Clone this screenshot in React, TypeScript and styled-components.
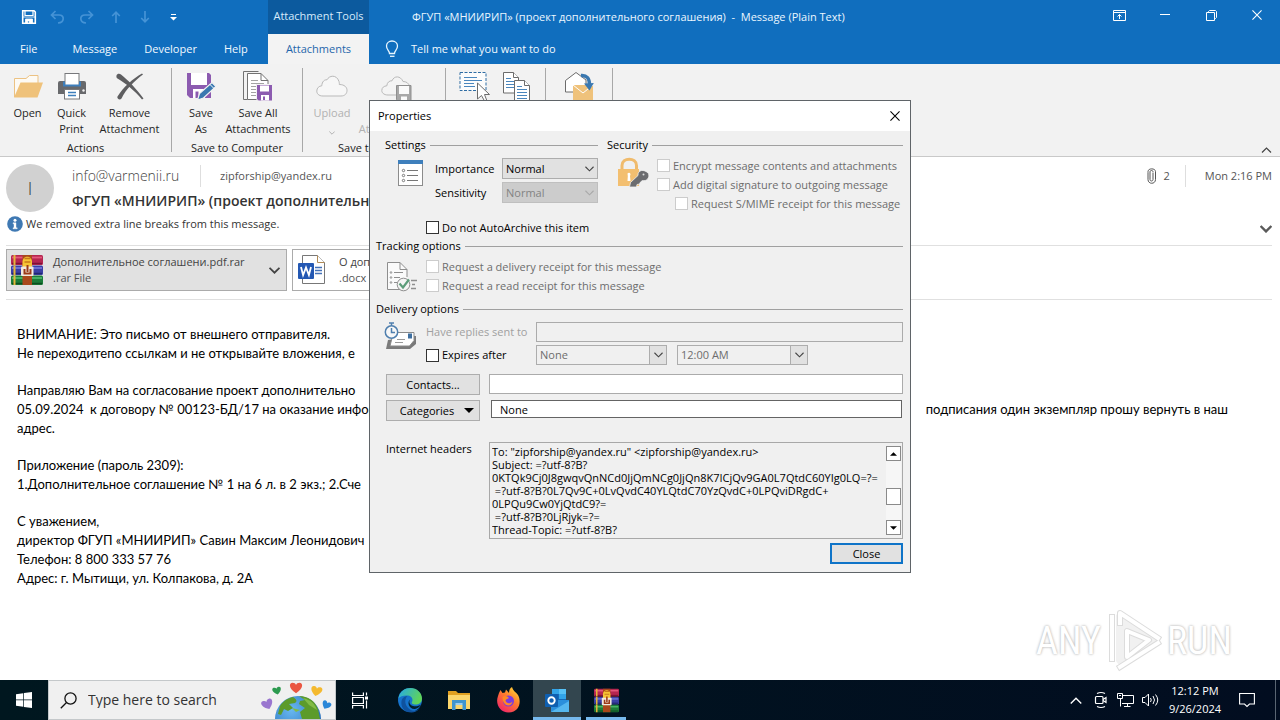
import React from "react";
import styled, { createGlobalStyle, css } from "styled-components";

const UI = '"Open Sans", "Noto Sans", sans-serif';

const Global = createGlobalStyle`
  * { box-sizing: border-box; }
  body { margin: 0; background: #fff; font-family: ${UI}; font-size: 11px; line-height: 16px; color: #222; }
  button, input, select, textarea { font: inherit; color: inherit; margin: 0; border-radius: 0; }
  button { padding: 0; border: 0; background: none; }
  svg { display: block; flex: none; }
  h1, h2, p { margin: 0; font: inherit; }
`;

const Page = styled.div`
  position: relative;
  display: flex;
  flex-direction: column;
  min-height: 100vh;
`;

/* ---------- title bar ---------- */

const TopBar = styled.header`
  display: grid;
  grid-template-columns: 268px 101px 1fr auto;
  grid-template-rows: 34px 30px;
  background: #106ebe;
  color: #fff;
`;

const QuickAccess = styled.div`
  display: flex;
  align-items: center;
  padding-left: 14px;
`;

const QuickButton = styled.button<{ $dim?: boolean }>`
  display: flex;
  width: 29px;
  height: 32px;
  align-items: center;
  justify-content: center;
  color: ${(p) => (p.$dim ? "#4593d6" : "#fff")};
`;

const ContextTitle = styled.div`
  display: flex;
  align-items: center;
  justify-content: center;
  padding-bottom: 2px;
  background: #0c5a9e;
  color: #d6ebfb;
  white-space: nowrap;
`;

const WindowTitle = styled.h1`
  align-self: center;
  padding-left: 43px;
  color: #eaf6ff;
  white-space: pre;
`;

const WindowButtons = styled.div`
  display: flex;
  padding-bottom: 4px;
`;

const WindowButton = styled.button`
  display: flex;
  width: 46px;
  align-items: center;
  justify-content: center;
`;

const Tabs = styled.nav`
  grid-row: 2;
  display: flex;
  align-items: center;
  gap: 27px;
  padding-left: 20px;
  & > :first-child { margin-right: 8px; }
`;

const Tab = styled.button`
  color: #f2f9ff;
`;

const ActiveTab = styled.button`
  grid-row: 2;
  background: #f3f3f3;
  color: #1f66ab;
`;

const TellMe = styled.button`
  grid-row: 2;
  display: flex;
  align-items: center;
  gap: 12px;
  padding-left: 16px;
  color: #f2f9ff;
`;

/* ---------- ribbon ---------- */

const Ribbon = styled.div`
  display: flex;
  height: 93px;
  background: #f2f2f2;
  border-bottom: 1px solid #c9c9c9;
`;

const RibbonGroup = styled.section<{ $width: number }>`
  display: flex;
  flex-direction: column;
  flex: none;
  align-items: center;
  width: ${(p) => p.$width}px;
  padding-top: 7px;
`;

const GroupRule = styled.div`
  flex: none;
  width: 1px;
  margin: 4px 0;
  background: #a8a8a8;
`;

const GroupButtons = styled.div`
  display: flex;
  height: 69px;
`;

const GroupLabel = styled.div`
  min-width: 72px;
`;

const RibbonButton = styled.button<{ $width: number }>`
  display: flex;
  flex-direction: column;
  align-items: center;
  flex: none;
  width: ${(p) => p.$width}px;
  gap: 4px;
  color: #262626;
  white-space: pre-line;
  &:disabled { color: #b1b1b1; }
  & > svg { margin-top: 6px; }
`;

const RibbonIcon = styled.span`
  display: flex;
  height: 30px;
  align-items: center;
  justify-content: center;
`;

const Collapse = styled.button`
  margin: auto 8px 3px auto;
  color: #444;
`;

/* ---------- message header ---------- */

const MessageHead = styled.div`
  display: flex;
  gap: 18px;
  height: 58px;
  padding: 7px 8px 0 6px;
`;

const Avatar = styled.div`
  display: flex;
  flex: none;
  width: 48px;
  height: 48px;
  align-items: center;
  justify-content: center;
  border-radius: 50%;
  background: #d1d1d1;
  color: #333;
  font-size: 18px;
  font-weight: 300;
`;

const Who = styled.div`
  flex: 1;
  min-width: 0;
`;

const Addresses = styled.div`
  display: flex;
  align-items: center;
  height: 24px;
  color: #555;
`;

const Sender = styled.span`
  width: 128px;
  font-size: 14px;
  font-weight: 300;
  color: #444;
`;

const ThinRule = styled.span`
  width: 1px;
  height: 22px;
  margin-right: 19px;
  background: #dedede;
`;

const Subject = styled.h2`
  font-size: 14px;
  font-weight: 600;
  line-height: 26px;
  color: #333;
  white-space: nowrap;
`;

const Meta = styled.div`
  display: flex;
  align-items: center;
  height: 24px;
  color: #555;
  white-space: nowrap;
  & > svg { margin-right: 7px; }
  & > ${ThinRule} { margin-left: 15px; }
`;

const InfoBar = styled.div`
  display: flex;
  align-items: center;
  gap: 3px;
  height: 18px;
  padding: 0 8px 0 7px;
  color: #333;
  & > button { margin-left: auto; padding-top: 10px; color: #5a5a5a; }
`;

const Attachments = styled.div`
  display: flex;
  gap: 5px;
  margin: 12px 8px 0 6px;
  padding: 3px 0 8px;
  border: solid #e0e0e0;
  border-width: 1px 0;
`;

const Attachment = styled.button<{ $selected?: boolean }>`
  display: flex;
  flex: none;
  align-items: center;
  width: 281px;
  height: 42px;
  padding: 0 6px 0 4px;
  text-align: left;
  border: 1px solid #ababab;
  background: ${(p) => (p.$selected ? "#e1e1e1" : "#fff")};
  color: #444;
  & > svg:last-child { margin-left: auto; }
`;

const FileName = styled.span`
  display: block;
  padding-left: 10px;
  white-space: nowrap;
  & small { display: block; font-size: 11px; color: #555; }
`;

const MessageBody = styled.main`
  position: relative;
  flex: 1;
  padding: 25px 52px 40px 17px;
  font-family: Lato, Carlito, "Open Sans", sans-serif;
  font-size: 13px;
  line-height: 19px;
  color: #000;
  & p { margin-bottom: 18px; white-space: nowrap; }
`;

const SplitLine = styled.span`
  display: flex;
  justify-content: space-between;
`;

const Watermark = styled.div`
  position: absolute;
  right: 48px;
  bottom: 7px;
  display: flex;
  align-items: center;
  gap: 5px;
  font-family: "Liberation Sans Narrow", "Roboto Condensed", "DejaVu Sans Condensed", sans-serif;
  font-size: 38px;
  line-height: 64px;
  color: #fff;
  text-shadow: 0 0 3px #bbb, 0 0 2px #ccc;
`;

/* ---------- dialog ---------- */

const DialogLayer = styled.div`
  position: absolute;
  inset: 100px 0 auto 0;
  display: flex;
  justify-content: center;
`;

const Dialog = styled.section`
  width: 542px;
  border: 1px solid #5f6468;
  background: #f0f0f0;
  color: #000;
`;

const DialogTitle = styled.div`
  display: flex;
  align-items: center;
  justify-content: space-between;
  height: 30px;
  padding: 0 10px 0 8px;
  background: #fff;
`;

const DialogBody = styled.form`
  padding: 7px 7px 8px 6px;
`;

const Heading = styled.h2`
  display: flex;
  align-items: center;
  gap: 4px;
  height: 14px;
  &::after { content: ""; flex: 1; height: 1px; background: #a0a0a0; }
`;

const TopColumns = styled.div`
  display: grid;
  grid-template-columns: 213px 1fr;
  gap: 9px;
  padding-left: 9px;
`;

const SettingsArea = styled.div`
  display: flex;
  gap: 11px;
  padding: 6px 0 0 12px;
`;

const SettingsGrid = styled.div`
  display: grid;
  grid-template-columns: 67px 96px;
  grid-auto-rows: 21px;
  row-gap: 3px;
  align-items: center;
`;

const SecurityArea = styled.div`
  display: flex;
  gap: 8px;
  padding: 4px 0 0 10px;
`;

const Section = styled.div`
  display: grid;
  grid-template-columns: 50px 1fr;
`;

const TrackingSection = styled(Section)`
  padding: 4px 0 7px;
`;

const DeliverySection = styled(Section)`
  padding-top: 6px;
`;

const ArchiveRow = styled.div`
  padding: 5px 0 2px 50px;
`;

const SectionIcon = styled.div<{ $left: number; $top: number }>`
  padding: ${(p) => p.$top}px 0 0 ${(p) => p.$left}px;
`;

const CheckLabel = styled.label<{ $off?: boolean; $indent?: boolean }>`
  display: flex;
  align-items: center;
  gap: 3px;
  height: 19px;
  margin-left: ${(p) => (p.$indent ? 18 : 0)}px;
  white-space: nowrap;
  color: ${(p) => (p.$off ? "#6d6d6d" : "#000")};
`;

const Box = styled.input`
  appearance: none;
  flex: none;
  width: 13px;
  height: 13px;
  border: 1px solid #333;
  background: #fff;
  &:disabled { border-color: #ccc; }
`;

const SelectWrap = styled.span<{ $width: number }>`
  position: relative;
  display: block;
  width: ${(p) => p.$width}px;
`;

const Select = styled.select<{ $flat?: boolean }>`
  appearance: none;
  display: block;
  width: 100%;
  height: ${(p) => (p.$flat ? 20 : 21)}px;
  padding: 0 0 0 3px;
  line-height: 16px;
  border: 1px solid #adadad;
  background: ${(p) => (p.$flat ? "#f0f0f0" : "#e1e1e1")};
  color: ${(p) => (p.$flat ? "#6d6d6d" : "#000")};
  opacity: 1;
  ${(p) => !p.$flat && css`&:disabled { background: #ccc; border-color: #bfbfbf; color: #838383; }`}
`;

const Arrow = styled.span<{ $boxed?: boolean; $dim?: boolean }>`
  position: absolute;
  right: 0;
  top: 0;
  bottom: 0;
  display: flex;
  width: 18px;
  align-items: center;
  justify-content: center;
  pointer-events: none;
  color: ${(p) => (p.$dim ? "#a9a9a9" : "#444")};
  ${(p) => p.$boxed && css`border: 1px solid #adadad; background: #e1e1e1;`}
`;

const FieldRow = styled.div`
  display: grid;
  grid-template-columns: 110px 1fr;
  align-items: center;
  height: 20px;
  margin-bottom: 3px;
`;

const DimLabel = styled.label`
  color: #a0a0a0;
`;

const Combos = styled.div`
  display: flex;
  gap: 10px;
`;

const TextField = styled.input<{ $dark?: boolean }>`
  display: block;
  width: 100%;
  height: ${(p) => (p.$dark ? 18 : 20)}px;
  padding: 0 8px;
  border: 1px solid ${(p) => (p.$dark ? "#646464" : "#ababab")};
  background: #fff;
  &:disabled { background: #f0f0f0; }
`;

const BottomGrid = styled.div`
  display: grid;
  grid-template-columns: 94px 1fr;
  column-gap: 9px;
  row-gap: 5px;
  align-items: start;
  padding: 6px 0 0 10px;
  & > label { padding-top: 15px; }
`;

const Inset = styled.div`
  padding: 0 1px 0 2px;
`;

const PushButton = styled.button`
  display: flex;
  align-items: center;
  justify-content: center;
  gap: 10px;
  height: 21px;
  border: 1px solid #adadad;
  background: #e1e1e1;
  & > svg { margin-right: -8px; }
`;

const HeadersBox = styled.div`
  display: flex;
  height: 97px;
  margin-top: 16px;
  padding: 2px 1px 2px 2px;
  border: 1px solid #a8a8a8;
`;

const HeadersText = styled.textarea`
  flex: 1;
  min-width: 0;
  padding: 0;
  border: 0;
  resize: none;
  overflow: hidden;
  white-space: pre;
  background: transparent;
  line-height: 13px;
`;

const Scroll = styled.div`
  display: flex;
  flex-direction: column;
  justify-content: space-between;
  width: 15px;
  margin: 1px 0;
  background: #f6f6f6;
  & > button {
    display: flex;
    align-items: center;
    justify-content: center;
    height: 15px;
    border: 1px solid #8a8a8a;
    background: #fff;
  }
`;

const Thumb = styled.span`
  height: 17px;
  margin-top: 12px;
  border: 1px solid #8a8a8a;
  background: #fff;
`;

const DialogFoot = styled.div`
  display: flex;
  justify-content: flex-end;
  padding-top: 4px;
`;

const CloseButton = styled.button`
  width: 73px;
  height: 21px;
  border: 2px solid #0f74c8;
  background: #e1e1e1;
`;

/* ---------- task bar ---------- */

const TaskBar = styled.footer`
  display: flex;
  height: 40px;
  background: linear-gradient(90deg, #00171f, #020d20);
  color: #fff;
`;

const StartButton = styled.button`
  display: flex;
  width: 48px;
  align-items: center;
  justify-content: center;
`;

const Search = styled.label`
  display: flex;
  align-items: center;
  width: 288px;
  padding-left: 11px;
  border: 1px solid #c4c8ca;
  background: #f0f0f0;
  color: #111;
`;

const SearchInput = styled.input`
  flex: 1;
  min-width: 0;
  padding: 0 0 0 11px;
  border: 0;
  background: none;
  font-size: 14px;
  &::placeholder { color: #333; opacity: 1; }
`;

const Apps = styled.div`
  display: flex;
  gap: 1px;
  & > :first-child { width: 49px; }
`;

const AppButton = styled.button<{ $active?: boolean; $running?: boolean }>`
  display: flex;
  width: 48px;
  align-items: center;
  justify-content: center;
  background: ${(p) => (p.$active ? "#33464f" : "none")};
  ${(p) => p.$active && css`box-shadow: inset 0 -3px #76b9ed;`}
  ${(p) => p.$running && css`background: linear-gradient(#76b9ed, #76b9ed) center bottom / 40px 3px no-repeat;`}
`;

const Tray = styled.div`
  display: flex;
  align-items: center;
  margin-left: auto;
  gap: 8px;
  & > :first-child { margin-right: 3px; }
`;

const TrayButton = styled.button`
  display: flex;
`;

const Clock = styled.time`
  width: 56px;
  margin-right: 8px;
  text-align: center;
  line-height: 18px;
`;

const Desktop = styled.button`
  align-self: stretch;
  width: 5px;
  margin-left: 12px;
  border-left: 1px solid #5a6572;
`;

/* ---------- icons ---------- */

const Chevron = ({ w = 10, h = 6, sw = 1.2, up = false }: { w?: number; h?: number; sw?: number; up?: boolean }) => (
  <svg width={w} height={h} viewBox="0 0 10 6" fill="none" stroke="currentColor" strokeWidth={sw}>
    <path d={up ? "M.5 5.500 5 1l4.500 4.500" : "M.5.5 5 5 9.500.5"} />
  </svg>
);

const WinRar = ({ size }: { size: number }) => (
  <svg width={size} height={size} viewBox="0 0 32 32">
    <rect x="0" y="1" width="32" height="10" rx="1.500" fill="#b52650" />
    <path d="M1 3.500h30" stroke="#e5577c" strokeWidth="1.800" />
    <path d="M1 9.500h30" stroke="#7d1235" strokeWidth="1.500" />
    <rect x="0" y="11.500" width="32" height="9.500" rx="1.500" fill="#3a3fa5" />
    <path d="M1 14h30" stroke="#7377d8" strokeWidth="1.800" />
    <path d="M1 19.500h30" stroke="#22266f" strokeWidth="1.500" />
    <rect x="0" y="21.500" width="32" height="9.500" rx="1.500" fill="#1c7c39" />
    <path d="M1 24h30" stroke="#4cb669" strokeWidth="1.800" />
    <path d="M1 29.500h30" stroke="#0d4e20" strokeWidth="1.500" />
    <path d="M3.500 1v10M3.500 11.500V21M3.500 21.500V31" stroke="#e4b53b" strokeWidth="2" />
    <rect x="11.500" y="1" width="9.500" height="30" fill="#a9481c" />
    <path d="M11.500 8c0-7 9.500-7 9.500 0v5h-9.500z" fill="#f6c435" />
    <path d="M13.500 4.500h6M13.500 8h6" stroke="#c8791a" strokeWidth="1.500" />
    <rect x="10" y="12.500" width="12.500" height="9.500" rx="1" fill="#f1e9df" />
    <path d="M13.500 15v4.500h6V15M16.500 11v7" stroke="#9b3a18" strokeWidth="2" fill="none" />
  </svg>
);

const SaveIcon = () => (
  <svg width="16" height="16" viewBox="0 0 16 16">
    <path d="M1.700 1.700h11.300l1.300 1.300v11.300H1.700z" fill="none" stroke="#fff" strokeWidth="1.600" />
    <path d="M4 2v4.500h8V2" fill="none" stroke="#fff" strokeWidth="1.200" />
    <path d="M2 8h12M4.500 14.500V10h7v4.500h-3V12h-2v2.500z" fill="#fff" stroke="#fff" strokeWidth=".8" />
  </svg>
);

const UndoIcon = ({ flip }: { flip?: boolean }) => (
  <svg width="15" height="14" viewBox="0 0 15 14" fill="none" stroke="currentColor" strokeWidth="1.700">
    <g transform={flip ? "translate(15 0) scale(-1 1)" : undefined}>
      <path d="M5.500 1 1.500 5l4 4M1.500 5h7.500c6 0 5.500 7.500-1 8" />
    </g>
  </svg>
);

const ArrowIcon = ({ down }: { down?: boolean }) => (
  <svg width="10" height="12" viewBox="0 0 10 12" fill="none" stroke="currentColor" strokeWidth="1.700">
    <path d={down ? "M5 0v11M1.200 7 5 10.800 8.800 7" : "M5 12V1M1.200 5 5 1.200 8.800 5"} />
  </svg>
);

const OpenIcon = () => (
  <svg width="30" height="26" viewBox="0 0 30 26">
    <path d="M1.500 24V5.500H13l3.500-3h8.500V10" fill="#fdfaf4" stroke="#ecc283" />
    <path d="M7.500 9.500H30L24.500 24.500H1z" fill="#efc27b" />
  </svg>
);

const PrinterIcon = () => (
  <svg width="30" height="28" viewBox="0 0 30 28">
    <path d="M1 11q0-2 2-2h24q2 0 2 2v11H1z" fill="#68696c" />
    <rect x="8" y="1.500" width="14" height="12" fill="#fff" stroke="#77787b" />
    <path d="M6 9.500v5h18v-5h-2v3H8v-3z" fill="#3e7fbc" />
    <rect x="7.500" y="17.500" width="15" height="9.500" fill="#fff" stroke="#77787b" />
    <path d="M11 20.500h8M11 23.500h8" stroke="#3e7fbc" strokeWidth="1.300" />
    <circle cx="26.500" cy="18.500" r="1.200" fill="#f2f2f2" />
  </svg>
);

const RemoveIcon = () => (
  <svg width="30" height="28" viewBox="0 0 30 28" fill="#5e5e60">
    <path d="M1.500 3.500C2 1.500 4.500 1 6 2.500 13 8 21 16.500 28.500 26.500L27 27.500C20 19 11 11.500 2.500 6.500 1.500 6 1.200 4.500 1.500 3.500z" />
    <path d="M28 2.500C20 8.500 11 17 6.500 26.500 5 28.500 1.500 27 2.500 24.500 8 15.500 18 6.500 27 1.500z" />
  </svg>
);

const SaveAsIcon = () => (
  <svg width="30" height="30" viewBox="0 0 30 30">
    <path d="M1 2h22l2 2v23H4l-3-3z" fill="#8c5bb0" />
    <rect x="5" y="2" width="16" height="12" fill="#fff" />
    <path d="M7 18h12v9H7z" fill="#fff" />
    <path d="M9.500 20.500h3V27h-3z" fill="#8c5bb0" />
    <path d="m11.500 29 2-6.500L26 11.500l4 4L17.500 27z" fill="#3a78b0" stroke="#f2f2f2" strokeWidth="1.200" />
    <path d="m24 13.500 4 4" stroke="#fff" />
  </svg>
);

const SaveAllIcon = () => (
  <svg width="30" height="32" viewBox="0 0 30 32">
    <path d="M4.500 29.500h-4v-28h15" fill="none" stroke="#727272" />
    <path d="M4.500 3.500h13.500l7 7V29.500H4.500z" fill="#fff" stroke="#727272" />
    <path d="M18 3.500v7h7" fill="none" stroke="#727272" />
    <path d="M8 10.500h7M8 13.500h13M8 16.500h6M8 19.500h5M8 22.500h5M8 25.500h5" stroke="#a3a3a3" />
    <path d="M13.500 14.500h16V31h-14l-2-2z" fill="#8c5bb0" stroke="#f2f2f2" />
    <path d="M17 15.500h9v6h-9zM18 25h8v5.500h-8z" fill="#fff" />
    <path d="M20 26.500h2V30h-2z" fill="#8c5bb0" />
  </svg>
);

const CloudIcon = () => (
  <svg width="32" height="26" viewBox="0 0 32 26" fill="#f7f7f7" stroke="#b9b9b9">
    <path d="M7 23C2.500 23 .8 20.500.8 18c0-3 2.200-5 5-5.200C6 8.500 8.500 6.500 11 6.800 13 2.500 20.500 1 23 8.500c0 0 .5 1.500.3 3 5.500 0 7.700 3 7.700 5.800 0 3.200-2 5.700-6 5.700z" />
  </svg>
);

const CloudSaveIcon = () => (
  <svg width="32" height="30" viewBox="0 0 32 30" fill="#f4f4f4" stroke="#b9b9b9">
    <path transform="translate(0 4)" d="M7 20C2.500 20 .8 17.500.8 15.500c0-3 2.200-4.500 5-4.700C6 7.500 8.500 5.500 11 5.800 13 .5 19.500.5 22 6.500c3 0 6 1.500 6.500 5V20z" />
    <path d="M15.500 14.500h14.500v16H17.500l-2-2z" fill="#a8a8a8" stroke="#8f8f8f" />
    <path d="M18 15h10v8H18z" fill="#fafafa" stroke="none" />
    <path d="M20 25.500h6v5h-6z" fill="#fafafa" stroke="none" />
  </svg>
);

const SelectAllIcon = () => (
  <svg width="32" height="30" viewBox="0 0 32 30">
    <rect x="2" y="1.500" width="26" height="18" fill="#fcfcfc" stroke="#2f6ca3" strokeDasharray="3 1.500" />
    <path d="M6 6.500h13M6 9.500h18M6 12.500h10M6 15.500h11" stroke="#4a86bd" strokeWidth="1.200" />
    <path d="M19.500 12v16l4-3.500 3 5.500h2.500l-2.500-6.500h5z" fill="#fff" stroke="#6c6c6c" />
  </svg>
);

const CopyIcon = () => (
  <svg width="28" height="30" viewBox="0 0 28 30" fill="#fff" stroke="#6c6c6c">
    <path d="M.5 1.500h10l5 5V22H.5z" />
    <path d="M10.500 1.500v5h5" />
    <path d="M3 7.500h5M3 10.500h8M3 13.500h8M3 16.500h8" stroke="#4a86bd" />
    <path d="M11.500 9.500h10l5 5V32h-15z" />
    <path d="M21.500 9.500v5h5" />
    <path d="M14 15.500h5M14 18.500h10M14 21.500h10M14 24.500h10M14 27.500h10" stroke="#4a86bd" />
  </svg>
);

const ShowMessageIcon = () => (
  <svg width="30" height="30" viewBox="0 0 30 30">
    <path d="M1.500 21V9.500L12 1.500 22 9v12z" fill="#fff" stroke="#6c6c6c" />
    <path d="M9 14h20v16H9z" fill="#efc27b" />
    <path d="m9 14 10 8 10-8" fill="none" stroke="#fff" />
    <path d="M17 4.500c6-.5 8.500 3 8.500 9" fill="none" stroke="#3a78b0" strokeWidth="3.400" />
    <path d="m20 12.500 5.500 7 4.300-7.500z" fill="#3a78b0" />
  </svg>
);

const BulbIcon = () => (
  <svg width="14" height="18" viewBox="0 0 14 18" fill="none" stroke="#e8f6ff" strokeWidth="1.300">
    <path d="M4.500 13.500c0-3-3-3.500-3-7.500C1.500 3 4 1 7 1s5.500 2 5.500 5c0 4-3 4.500-3 7.500z" />
    <path d="M5 16.300h4.500" />
  </svg>
);

const ClipIcon = () => (
  <svg width="9" height="16" viewBox="0 0 9 16" fill="none" stroke="#555">
    <path d="M6 4.500v7c0 2-3 2-3 0V4c0-1 .5-1.500 1.500-1.500S6 3 6 4M1 4.500V3.500C1 0 8.500 0 8.500 3.500v8c0 5-7.500 5-7.500 0z" />
  </svg>
);

const InfoIcon = () => (
  <svg width="16" height="16" viewBox="0 0 16 16">
    <circle cx="8" cy="8" r="7.800" fill="#3f79b3" />
    <circle cx="8" cy="4.200" r="1.500" fill="#fff" />
    <path d="M6 6.800h3v5h1.200v1H6v-1h1V7.800H6z" fill="#fff" stroke="#fff" strokeWidth=".4" />
  </svg>
);

const WordIcon = () => (
  <svg width="32" height="32" viewBox="-1 0 32 32">
    <path d="M4.500 1.500h15l7 7v21h-22z" fill="#fff" stroke="#777" />
    <path d="M19.500 1.500v7h7" fill="#fff" stroke="#b08a55" />
    <path d="M17 13.500h7M17 16.500h7M17 19.500h7" stroke="#4472b8" strokeWidth="1.300" />
    <rect x="0" y="9" width="16" height="16" rx="1" fill="#2458b3" />
    <path d="m3 13 2.100 8L8 13.500l2.900 7.500L13 13" fill="none" stroke="#fff" strokeWidth="1.800" />
  </svg>
);

const CloseIcon = ({ size = 11 }: { size?: number }) => (
  <svg width={size} height={size} viewBox="0 0 11 11" stroke="currentColor" strokeWidth="1.200">
    <path d="m.5.5 10 10M10.500.5l-10 10" />
  </svg>
);

const SettingsIcon = () => (
  <svg width="27" height="29" viewBox="0 0 27 29">
    <rect x="1.500" y="2.500" width="24" height="25" fill="#fff" stroke="#8c8c8c" />
    <path d="M1 2h25v4H1z" fill="#3e7fbc" />
    <path d="M10 12.500h11M10 17.500h11M10 22.500h11" stroke="#777" />
    <g fill="none" stroke="#777">
      <circle cx="6.500" cy="12.500" r="1.200" />
      <circle cx="6.500" cy="17.500" r="1.200" />
      <circle cx="6.500" cy="22.500" r="1.200" />
    </g>
  </svg>
);

const LockIcon = () => (
  <svg width="32" height="33" viewBox="0 0 32 33">
    <path d="M5 14V9.500C5 1 19.500 1 19.500 9.500V14" fill="none" stroke="#f0bb6c" strokeWidth="3" />
    <rect x="1" y="13" width="21" height="17" fill="#f3bf70" />
    <path d="M10.500 17.500c2-2 4 .5 2.500 2.500l.5 5h-3l.3-5z" fill="#fff" />
    <path d="m12.500 31 1-4.500 7.500-7c-.5-5.500 6-7 10.500-2 1.500 4.500-2 8-6 7l-2 1.500-1 2-2.500.5-.5 2.500z" fill="#6b6c6f" stroke="#f0f0f0" strokeWidth=".8" />
    <circle cx="26.500" cy="18.500" r="1" fill="#ddd" />
  </svg>
);

const TrackingIcon = () => (
  <svg width="32" height="31" viewBox="0 0 32 31" fill="none" stroke="#8e8e8e">
    <path d="M14 28.500H1.500v-27H14l7 7V16" fill="#fafafa" />
    <path d="M14 1.500v7h7M8 11.500h9M8 16.500h6M8 21.500h3" />
    <circle cx="5" cy="11.500" r=".8" /><circle cx="5" cy="16.500" r=".8" /><circle cx="5" cy="21.500" r=".8" />
    <circle cx="17.500" cy="23.500" r="6.300" fill="#f4f4f4" />
    <path d="m13.500 22.500 3.500 4 6-8" stroke="#5c9c7a" strokeWidth="2.200" />
    <path d="M25 19.500h6M26 23.500h3M25 27.500h5" strokeWidth="1.300" />
  </svg>
);

const DeliveryIcon = () => (
  <svg width="33" height="29" viewBox="0 0 33 29">
    <path d="m4 18-2 9h24l6-5v-8h-3z" fill="#7a7a7a" />
    <path d="M12 10.500h18v8l-4.500 5.500H6l2-8z" fill="#fff" stroke="#8a8a8a" />
    <path d="M13 17.500h8M11 20.500h8" stroke="#999" />
    <path d="M24 11.500h4v5h-4z" fill="#3e6fa0" />
    <circle cx="7.500" cy="10" r="6.200" fill="#f7f7f7" stroke="#4f7fae" strokeWidth="1.500" />
    <path d="M7.500 6v4.500h3.500M7.500 3.500V1M5 1h5" fill="none" stroke="#4f7fae" strokeWidth="1.500" />
  </svg>
);

const Triangle = ({ up, w = 7 }: { up?: boolean; w?: number }) => (
  <svg width={w} height={up ? 4 : Math.ceil(w / 2)} viewBox="0 0 8 4" fill="#000">
    <path d={up ? "M0 4h8L4 0z" : "M0 0h8L4 4z"} />
  </svg>
);

const heart = "M8 14C-1 8 0 2 4 2c2 0 3.500 1 4 2.500C8.500 3 10 2 12 2c4 0 5 6-4 12z";

const GlobeArt = () => (
  <svg width="74" height="38" viewBox="0 0 74 38">
    <defs>
      <radialGradient id="sea" cx=".35" cy=".3" r=".8">
        <stop offset="0" stopColor="#69b8f0" />
        <stop offset="1" stopColor="#1b63b4" />
      </radialGradient>
    </defs>
    <circle cx="37" cy="38" r="23" fill="url(#sea)" />
    <path d="M19 25c3-5 8-8 13-9 3 2 5 4 2 6l-6 1 4 4-5 3-4-2-3 6-3-1zM38 15c9 0 16 5 19 13l2 10H41l-2-7 5-4-6-4 1-3 5-1z" fill="#5c9b2b" />
    <path d="M42 17c8 2 12 6 14 12l-8-5zM31 27l8 2-4 2z" fill="#82bb45" />
    <path transform="translate(28 0) scale(.88)" d={heart} fill="#ea5642" />
    <path transform="translate(11 5) scale(.62) rotate(-12 8 8)" d={heart} fill="#2c9a4f" />
    <path transform="translate(49 4) scale(.8) rotate(12 8 8)" d={heart} fill="#f4b92e" />
    <path transform="translate(0 17) scale(.82) rotate(-22 8 8)" d={heart} fill="#9a76cf" />
    <path transform="translate(60 19) scale(.65) rotate(28 8 8)" d={heart} fill="#2b87d8" />
  </svg>
);

const TaskViewIcon = () => (
  <svg width="17" height="17" viewBox="0 0 17 17" fill="none" stroke="#fff" strokeWidth="1.200">
    <path d="M.6.5v3h10.800v-3M.6 16.500v-3h10.800v3M.6 5.500h10.800v6H.6zM14.500.5v3M14.500 8.500v8" />
    <path d="M13 4.500h3v3h-3z" fill="#fff" stroke="none" />
  </svg>
);

const EdgeIcon = () => (
  <svg width="26" height="26" viewBox="0 0 26 26">
    <defs>
      <linearGradient id="edgeTop" x1="0" y1="0" x2="1" y2=".4">
        <stop offset="0" stopColor="#25a9e8" />
        <stop offset="1" stopColor="#5fd45a" />
      </linearGradient>
    </defs>
    <circle cx="13" cy="13" r="12" fill="#1673cc" />
    <path d="M1.500 11C3 4 8 1 13.500 1 20 1 25 6 25 11.500c0 4-3 6-6.500 6-3 0-4.500-1.200-3.500-2.500 1.500-3-.5-6-4-6.500-4-.5-8 1-9.500 2.500z" fill="url(#edgeTop)" />
    <path d="M10.500 9C7 12 7.500 19 13 22.500c3 2 7 1.500 9.500-1-3 4.500-9 4.500-13 3C4 22 3 14 6 11c1-1.200 3-2 4.500-2z" fill="#0f529e" />
    <path d="M13.500 12c-2 2-1.500 6 2.500 7 3 .8 6 0 8-1.500-1 2-3 4-6 4.500-6 .5-8.500-7-4.500-10z" fill="#02202b" />
  </svg>
);

const ExplorerIcon = () => (
  <svg width="24" height="22" viewBox="0 0 24 22">
    <path d="M1 2h8l2 2h12v5H1z" fill="#e0a021" />
    <path d="M1 6h22v14H1z" fill="#fbd66c" />
    <path d="M5 11h14v10h-3.500v-5h-7v5H5z" fill="#3f95cf" />
    <path d="M8.500 14h7v2h-7z" fill="#9ccdec" />
  </svg>
);

const FirefoxIcon = () => (
  <svg width="25" height="26" viewBox="0 0 25 26">
    <defs>
      <linearGradient id="fox" x1=".9" y1="0" x2=".2" y2="1">
        <stop offset="0" stopColor="#ffe238" />
        <stop offset=".45" stopColor="#ff7b2d" />
        <stop offset="1" stopColor="#f0206c" />
      </linearGradient>
    </defs>
    <path d="M3 6 4.500 3l2 3 2.500-.5 1-3 3 3.500c0-3 1-5 3-6 1 4 4 5 6 8 3.500 6 2 17-9.500 17.500C4 25.500-1 17 2 9z" fill="url(#fox)" />
    <circle cx="12.500" cy="14" r="5.500" fill="#7a3be0" />
    <path d="M6.500 10c3-2 5-.5 6.500 1-1 1-3 1-3.500 2.500 1 3.500 5 3.500 7 1-1 6-10 5.500-10-4.500z" fill="#ff8a22" />
  </svg>
);

const OutlookIcon = () => (
  <svg width="26" height="25" viewBox="0 0 26 25">
    <path d="M8 1h14v15H8z" fill="#1469b8" />
    <path d="M8 1h7v5H8zM15 6h7v5h-7z" fill="#32a4e8" />
    <path d="M15 1h7v5h-7z" fill="#57c1f5" />
    <path d="M7 12h18v12H7z" fill="#2b8fdb" />
    <path d="m7 24 18-11v11z" fill="#55b7ef" />
    <rect x="1" y="6" width="13" height="13" rx="1" fill="#0f5fb0" />
    <circle cx="7.500" cy="12.500" r="3.200" fill="none" stroke="#fff" strokeWidth="1.900" />
  </svg>
);

const playLines = "M6 8v42M14 14V4l38 25M21 22v26l22-17zM14 58l38-24";

const AnyRunMark = () => (
  <svg width="56" height="64" viewBox="0 0 56 64" fill="none" strokeLinejoin="round" strokeLinecap="square">
    <path d="M10 6v46l6 8 38-28L14 3z" fill="#f1f1f1" />
    <path d={playLines} stroke="#dcdcdc" strokeWidth="6" />
    <path d={playLines} stroke="#fff" strokeWidth="4" />
  </svg>
);

const headersText = `To: "zipforship@yandex.ru" <zipforship@yandex.ru>
Subject: =?utf-8?B?
0KTQk9Cj0J8gwqvQnNCd0JjQmNCg0JjQn8K7ICjQv9GA0L7QtdC60YIg0LQ=?=
 =?utf-8?B?0L7Qv9C+0LvQvdC40YLQtdC70YzQvdC+0LPQviDRgdC+
0LPQu9Cw0YjQtdC9?=
 =?utf-8?B?0LjRjyk=?=
Thread-Topic: =?utf-8?B?`;

/* ---------- parts ---------- */

function Check({ label, off, indent }: { label: string; off?: boolean; indent?: boolean }) {
  return (
    <CheckLabel $off={off} $indent={indent}>
      <Box type="checkbox" disabled={off} />
      {label}
    </CheckLabel>
  );
}

function Dropdown(props: { id?: string; name: string; value: string; width: number; flat?: boolean; disabled?: boolean }) {
  return (
    <SelectWrap $width={props.width}>
      <Select id={props.id} aria-label={props.name} $flat={props.flat} disabled={props.disabled}>
        <option>{props.value}</option>
      </Select>
      <Arrow $boxed={props.flat} $dim={props.disabled && !props.flat}>
        <Chevron w={9} h={6} />
      </Arrow>
    </SelectWrap>
  );
}

type ActionProps = { width: number; icon: React.ReactNode; name?: string; label?: string; off?: boolean; menu?: boolean };

function Action({ width, icon, name, label, off, menu }: ActionProps) {
  return (
    <RibbonButton type="button" $width={width} disabled={off} aria-label={name}>
      <RibbonIcon>{icon}</RibbonIcon>
      {label}
      {menu && <Chevron w={6} h={4} sw={1.6} />}
    </RibbonButton>
  );
}

function PropertiesDialog() {
  return (
    <DialogLayer>
      <Dialog role="dialog" aria-label="Properties">
        <DialogTitle>
          Properties
          <button type="button" aria-label="Close dialog"><CloseIcon size={10} /></button>
        </DialogTitle>
        <DialogBody>
          <TopColumns>
            <div>
              <Heading>Settings</Heading>
              <SettingsArea>
                <SettingsIcon />
                <SettingsGrid>
                  <label htmlFor="importance">Importance</label>
                  <Dropdown id="importance" name="Importance" value="Normal" width={96} />
                  <label htmlFor="sensitivity">Sensitivity</label>
                  <Dropdown id="sensitivity" name="Sensitivity" value="Normal" width={96} disabled />
                </SettingsGrid>
              </SettingsArea>
            </div>
            <div>
              <Heading>Security</Heading>
              <SecurityArea>
                <LockIcon />
                <div>
                  <Check off label="Encrypt message contents and attachments" />
                  <Check off label="Add digital signature to outgoing message" />
                  <Check off indent label="Request S/MIME receipt for this message" />
                </div>
              </SecurityArea>
            </div>
          </TopColumns>
          <ArchiveRow><Check label="Do not AutoArchive this item" /></ArchiveRow>
          <Heading>Tracking options</Heading>
          <TrackingSection>
            <SectionIcon $left={10} $top={4}><TrackingIcon /></SectionIcon>
            <div>
              <Check off label="Request a delivery receipt for this message" />
              <Check off label="Request a read receipt for this message" />
            </div>
          </TrackingSection>
          <Heading>Delivery options</Heading>
          <DeliverySection>
            <SectionIcon $left={8} $top={0}><DeliveryIcon /></SectionIcon>
            <div>
              <FieldRow>
                <DimLabel htmlFor="replies">Have replies sent to</DimLabel>
                <TextField id="replies" disabled />
              </FieldRow>
              <FieldRow>
                <Check label="Expires after" />
                <Combos>
                  <Dropdown name="Expiry date" value="None" width={131} flat disabled />
                  <Dropdown name="Expiry time" value="12:00 AM" width={131} flat disabled />
                </Combos>
              </FieldRow>
            </div>
          </DeliverySection>
          <BottomGrid>
            <PushButton type="button">Contacts...</PushButton>
            <TextField aria-label="Contacts" />
            <PushButton type="button">
              <span>Cate<u>g</u>ories</span>
              <Triangle w={10} />
            </PushButton>
            <Inset><TextField $dark aria-label="Categories" defaultValue="None" /></Inset>
            <label htmlFor="headers">Internet headers</label>
            <HeadersBox>
              <HeadersText id="headers" readOnly defaultValue={headersText} />
              <Scroll>
                <button type="button" aria-label="Scroll up"><Triangle up /></button>
                <Thumb />
                <button type="button" aria-label="Scroll down"><Triangle /></button>
              </Scroll>
            </HeadersBox>
          </BottomGrid>
          <DialogFoot>
            <CloseButton type="button">Close</CloseButton>
          </DialogFoot>
        </DialogBody>
      </Dialog>
    </DialogLayer>
  );
}

export default function App() {
  return (
    <Page>
      <Global />
      <TopBar>
        <QuickAccess>
          <QuickButton aria-label="Save"><SaveIcon /></QuickButton>
          <QuickButton $dim aria-label="Undo"><UndoIcon /></QuickButton>
          <QuickButton $dim aria-label="Redo"><UndoIcon flip /></QuickButton>
          <QuickButton $dim aria-label="Previous"><ArrowIcon /></QuickButton>
          <QuickButton $dim aria-label="Next"><ArrowIcon down /></QuickButton>
          <QuickButton aria-label="Customize">
            <svg width="7" height="7" viewBox="0 0 7 7" fill="#fff"><path d="M1 0h5v1H1zM0 3h7L3.500 6.500z" /></svg>
          </QuickButton>
        </QuickAccess>
        <ContextTitle>Attachment Tools</ContextTitle>
        <WindowTitle>{"ФГУП «МНИИРИП» (проект дополнительного соглашения)  -  Message (Plain Text)"}</WindowTitle>
        <WindowButtons>
          <WindowButton aria-label="Ribbon display options">
            <svg width="13" height="11" viewBox="0 0 13 11" fill="none" stroke="#fff"><path d="M.5.5h12v10H.5zM.5 2.500h12M6.500 9V4.500M4.500 6.500l2-2 2 2" /></svg>
          </WindowButton>
          <WindowButton aria-label="Minimize">
            <svg width="10" height="2" viewBox="0 0 10 2" fill="#fff"><path d="M0 0h10v1H0z" /></svg>
          </WindowButton>
          <WindowButton aria-label="Restore">
            <svg width="11" height="11" viewBox="0 0 11 11" fill="none" stroke="#fff"><path d="M.5 2.500h8v8h-8zM2.500 2.500V1.500l1-1h6l1 1v6l-1 1h-1" /></svg>
          </WindowButton>
          <WindowButton aria-label="Close window"><CloseIcon size={10} /></WindowButton>
        </WindowButtons>
        <Tabs>
          <Tab>File</Tab>
          <Tab>Message</Tab>
          <Tab>Developer</Tab>
          <Tab>Help</Tab>
        </Tabs>
        <ActiveTab>Attachments</ActiveTab>
        <TellMe><BulbIcon />Tell me what you want to do</TellMe>
      </TopBar>

      <Ribbon>
        <RibbonGroup $width={171}>
          <GroupButtons>
            <Action width={44} icon={<OpenIcon />} label="Open" />
            <Action width={44} icon={<PrinterIcon />} label={"Quick\nPrint"} />
            <Action width={72} icon={<RemoveIcon />} label={"Remove\nAttachment"} />
          </GroupButtons>
          Actions
        </RibbonGroup>
        <GroupRule />
        <RibbonGroup $width={130}>
          <GroupButtons>
            <Action width={42} icon={<SaveAsIcon />} label={"Save\nAs"} />
            <Action width={72} icon={<SaveAllIcon />} label={"Save All\nAttachments"} />
          </GroupButtons>
          Save to Computer
        </RibbonGroup>
        <GroupRule />
        <RibbonGroup $width={142}>
          <GroupButtons>
            <Action off menu width={46} icon={<CloudIcon />} label="Upload" />
            <Action off width={84} icon={<CloudSaveIcon />} label={"\u00a0\nAttachments\u00a0\u00a0\u00a0\u00a0"} />
          </GroupButtons>
          <GroupLabel>Save to</GroupLabel>
        </RibbonGroup>
        <GroupRule />
        <RibbonGroup $width={99}>
          <GroupButtons>
            <Action width={43} icon={<SelectAllIcon />} name="Select all" />
            <Action width={43} icon={<CopyIcon />} name="Copy" />
          </GroupButtons>
        </RibbonGroup>
        <GroupRule />
        <RibbonGroup $width={66}>
          <GroupButtons>
            <Action width={60} icon={<ShowMessageIcon />} name="Show message" />
          </GroupButtons>
        </RibbonGroup>
        <GroupRule />
        <Collapse aria-label="Collapse ribbon"><Chevron w={11} h={6} up /></Collapse>
      </Ribbon>

      <MessageHead>
        <Avatar>I</Avatar>
        <Who>
          <Addresses>
            <Sender>info@varmenii.ru</Sender>
            <ThinRule />
            zipforship@yandex.ru
          </Addresses>
          <Subject>ФГУП «МНИИРИП» (проект дополнительн</Subject>
        </Who>
        <Meta>
          <ClipIcon />
          2
          <ThinRule />
          Mon 2:16 PM
        </Meta>
      </MessageHead>
      <InfoBar>
        <InfoIcon />
        We removed extra line breaks from this message.
        <button aria-label="Expand header"><Chevron w={12} h={8} sw={2} /></button>
      </InfoBar>
      <Attachments>
        <Attachment $selected>
          <WinRar size={32} />
          <FileName>Дополнительное соглашени.pdf.rar<small>.rar File</small></FileName>
          <Chevron w={11} h={7} sw={1.6} />
        </Attachment>
        <Attachment>
          <WordIcon />
          <FileName>О допол<small>.docx</small></FileName>
        </Attachment>
      </Attachments>

      <MessageBody>
        <p>
          ВНИМАНИЕ: Это письмо от внешнего отправителя.<br />
          Не переходитепо ссылкам и не открывайте вложения, е
        </p>
        <p>
          Направляю Вам на согласование проект дополнительно<br />
          <SplitLine>
            <span>05.09.2024&nbsp; к договору № 00123-БД/17 на оказание инфор</span>
            <span>подписания один экземпляр прошу вернуть в наш</span>
          </SplitLine>
          адрес.
        </p>
        <p>
          Приложение (пароль 2309):<br />
          1.Дополнительное соглашение № 1 на 6 л. в 2 экз.; 2.Сче
        </p>
        <p>
          С уважением,<br />
          директор ФГУП «МНИИРИП» Савин Максим Леонидович<br />
          Телефон: 8 800 333 57 76<br />
          Адрес: г. Мытищи, ул. Колпакова, д. 2А
        </p>
        <Watermark><span>ANY</span><AnyRunMark /><span>RUN</span></Watermark>
      </MessageBody>

      <TaskBar>
        <StartButton aria-label="Start">
          <svg width="16" height="16" viewBox="0 0 16 16" fill="#fff"><path d="M0 2.300 7.300 1.200v6.400H0zM8 1.100 16 0v7.600H8zM0 8.300h7.300v6.500L0 13.700zM8 8.300h8V16l-8-1.100z" /></svg>
        </StartButton>
        <Search>
          <svg width="17" height="17" viewBox="0 0 17 17" fill="none" stroke="#111" strokeWidth="1.300"><circle cx="10.500" cy="6.500" r="5.600" /><path d="M6.500 10.500.8 16.200" /></svg>
          <SearchInput placeholder="Type here to search" aria-label="Search" />
          <GlobeArt />
        </Search>
        <Apps>
          <AppButton aria-label="Task view"><TaskViewIcon /></AppButton>
          <AppButton aria-label="Edge"><EdgeIcon /></AppButton>
          <AppButton aria-label="File Explorer"><ExplorerIcon /></AppButton>
          <AppButton aria-label="Firefox"><FirefoxIcon /></AppButton>
          <AppButton $active aria-label="Outlook"><OutlookIcon /></AppButton>
          <AppButton $running aria-label="WinRAR"><WinRar size={25} /></AppButton>
        </Apps>
        <Tray>
          <TrayButton aria-label="Hidden icons"><Chevron w={12} h={7} up /></TrayButton>
          <TrayButton aria-label="Meet now">
            <svg width="16" height="18" viewBox="0 0 16 18" fill="none" stroke="#fff" strokeWidth="1.200"><rect x="2.500" y="5.500" width="7.500" height="7" rx="1" /><path d="m10 8.500 3-2v5l-3-2M4 2.500q4-2 8 0M4 15.500q4 2 8 0" /></svg>
          </TrayButton>
          <TrayButton aria-label="Network">
            <svg width="17" height="14" viewBox="0 0 17 14" fill="none" stroke="#fff"><path d="M5 2.500h11.500v8H5M3.500 6v7.500M10.500 10.500v3M7 13.500h6.500M.5.500h5v5h-5zM2 2.500h2" /></svg>
          </TrayButton>
          <TrayButton aria-label="Volume">
            <svg width="17" height="14" viewBox="0 0 17 14" fill="none" stroke="#fff"><path d="M.5 4.500h2.500l3.500-3.500v12L3 9.500H.5zM8.500 5q1.500 2 0 4M11 3q3 4 0 8M13.500 1.500q4.500 5.500 0 11" /></svg>
          </TrayButton>
          <Clock>12:12 PM<br />9/26/2024</Clock>
          <TrayButton aria-label="Notifications">
            <svg width="16" height="16" viewBox="0 0 16 16" fill="none" stroke="#fff" strokeWidth="1.100"><path d="M.6 1.500h14.800v10.500H10.500L8 14.500 5.500 12H.6z" /></svg>
          </TrayButton>
          <Desktop aria-label="Show desktop" />
        </Tray>
      </TaskBar>

      <PropertiesDialog />
    </Page>
  );
}
